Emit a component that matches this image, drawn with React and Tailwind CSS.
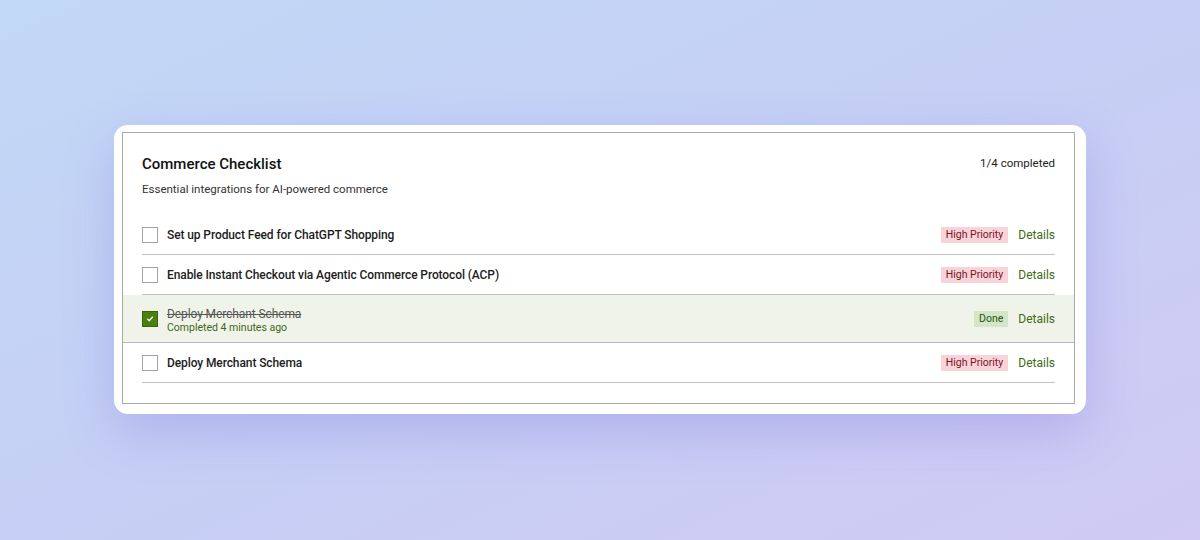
import React from "react";

const items = [
  { title: "Set up Product Feed for ChatGPT Shopping", done: false },
  { title: "Enable Instant Checkout via Agentic Commerce Protocol (ACP)", done: false },
  { title: "Deploy Merchant Schema", done: true, meta: "Completed 4 minutes ago" },
  { title: "Deploy Merchant Schema", done: false },
];

const Checkbox = ({ checked }) => {
  if (checked) {
    return (
      <div className="w-4 h-4 shrink-0 bg-[#4b800f] border border-[#3a640a] flex items-center justify-center">
        <svg width="8" height="8" viewBox="0 0 10 10" fill="none">
          <path d="M2 5.2l2 2 4-4.4" stroke="white" strokeWidth="1.6" strokeLinecap="round" strokeLinejoin="round" />
        </svg>
      </div>
    );
  }
  return <div className="w-4 h-4 shrink-0 bg-white border-[1.5px] border-[#a3a3a3]" />;
};

const Row = ({ item }) => {
  const right = (
    <div className="flex items-center gap-2.5">
      {item.done ? (
        <span className="bg-[#d4e6c8] text-[#2d5410] text-[10.5px] leading-4 px-[5px]">Done</span>
      ) : (
        <span className="bg-[#f8d3da] text-[#7e1426] text-[10.5px] leading-4 px-[5px]">High Priority</span>
      )}
      <button className="text-[12px] text-[#3e6a14]">Details</button>
    </div>
  );

  if (item.done) {
    return (
      <div className="-mx-[19px] px-[19px] h-12 bg-[#f0f3ea] border-b border-[#b9b9b9] flex items-center justify-between">
        <div className="flex items-center gap-[9px]">
          <Checkbox checked />
          <div className="flex flex-col pt-1">
            <span className="text-[12px] leading-[14px] tracking-[-0.1px] text-[#555] line-through">{item.title}</span>
            <span className="text-[10.5px] leading-[14px] text-[#3b6914]">{item.meta}</span>
          </div>
        </div>
        {right}
      </div>
    );
  }

  return (
    <div className="h-10 border-b border-[#c2c2c2] flex items-center justify-between">
      <div className="flex items-center gap-[9px]">
        <Checkbox />
        <span className="text-[12px] font-medium tracking-[-0.1px] text-[#1c1c1c]">{item.title}</span>
      </div>
      {right}
    </div>
  );
};

export default function App() {
  return (
    <div
      className="w-[1200px] h-[540px] bg-gradient-to-br from-[#c1d8f6] via-[#c6cff5] to-[#d0caf4] flex items-start justify-center pt-[125px]"
      style={{ fontFamily: "Roboto, 'Noto Sans', sans-serif" }}
    >
      <div className="w-[972px] bg-white rounded-[14px] pt-[7px] pl-2 pr-[11px] pb-[10px] shadow-[0_18px_50px_rgba(110,105,215,0.28)]">
        <div className="border border-[#a9a9a9] px-[19px] pt-5 pb-5">
          <div className="flex items-center justify-between">
            <h2 className="text-[15px] leading-[22px] font-medium text-[#111]">Commerce Checklist</h2>
            <span className="text-[11.5px] text-[#222]">1/4 completed</span>
          </div>
          <p className="mt-1.5 text-[11.5px] leading-4 text-[#333]">Essential integrations for AI-powered commerce</p>
          <div className="mt-[18px]">
            {items.map((item, i) => (
              <Row key={i} item={item} />
            ))}
          </div>
        </div>
      </div>
    </div>
  );
}
